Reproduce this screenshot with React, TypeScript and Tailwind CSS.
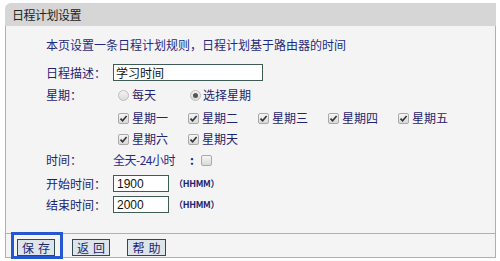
import React from "react";

const font = { fontFamily: '"Noto Sans CJK SC", "Liberation Sans", sans-serif' };

function Check({ checked = true }: { checked?: boolean }) {
  return (
    <span className="inline-flex items-center justify-center w-[11px] h-[11px] border border-[#a9a9a9] rounded-[2px] bg-gradient-to-b from-[#f6f6f6] to-[#d9d9d9] shrink-0">
      {checked && (
        <svg width="9" height="9" viewBox="0 0 9 9">
          <path d="M1.5 4.6 L3.6 6.8 L7.6 2" stroke="#333" strokeWidth="1.6" fill="none" />
        </svg>
      )}
    </span>
  );
}

function Radio({ checked }: { checked?: boolean }) {
  return (
    <span className="inline-flex items-center justify-center w-[11px] h-[11px] rounded-full border border-[#bdbdbd] bg-gradient-to-b from-[#f2f2f2] to-[#dcdcdc] shrink-0">
      {checked && <span className="w-[5px] h-[5px] rounded-full bg-[#555]" />}
    </span>
  );
}

const days1 = ["星期一", "星期二", "星期三", "星期四", "星期五"];
const days2 = ["星期六", "星期天"];

export default function App() {
  return (
    <div className="w-[500px] h-[261px] bg-white pt-[3px] pl-[5px]" style={font}>
      <div className="w-[491px]">
        <div className="h-[23px] bg-[#d6d6d6] rounded-tl-[6px] flex items-center pl-[7px] text-[12px] text-[#222] tracking-[-0.5px]">
          日程计划设置
        </div>

        <div className="h-[208px] bg-[#f4f4f4] border-x border-b border-[#f2a444] pl-[40px] text-[12px] text-[#1e2470] flex flex-col">
          <div className="mt-[11px] h-[16px] flex items-center text-[#1f2c80]">
            本页设置一条日程计划规则，日程计划基于路由器的时间
          </div>

          <div className="mt-[11px] h-[17px] flex items-center">
            <span className="w-[67px]">日程描述：</span>
            <div className="w-[150px] h-[17px] border border-[#3d5c55] bg-white flex items-center pl-[2px] text-[#111]">
              学习时间
            </div>
          </div>

          <div className="mt-[6px] h-[16px] flex items-center">
            <span className="w-[72px]">星期：</span>
            <div className="w-[72px] flex items-center gap-[3px]">
              <Radio />
              <span>每天</span>
            </div>
            <div className="flex items-center gap-[2px]">
              <Radio checked />
              <span>选择星期</span>
            </div>
          </div>

          <div className="mt-[7px] h-[16px] flex items-center pl-[72px]">
            {days1.map((d) => (
              <div key={d} className="w-[70px] flex items-center gap-[3px]">
                <Check />
                <span>{d}</span>
              </div>
            ))}
          </div>

          <div className="mt-[5px] h-[16px] flex items-center pl-[72px]">
            {days2.map((d) => (
              <div key={d} className="w-[70px] flex items-center gap-[3px]">
                <Check />
                <span>{d}</span>
              </div>
            ))}
          </div>

          <div className="mt-[5px] h-[16px] flex items-center">
            <span className="w-[67px]">时间：</span>
            <span className="w-[77px] text-[#1f2c90] tracking-[-0.5px]">全天-24小时</span>
            <span className="w-[11px] font-bold">:</span>
            <Check checked={false} />
          </div>

          <div className="mt-[7px] h-[17px] flex items-center">
            <span className="w-[67px]">开始时间：</span>
            <div className="w-[56px] h-[17px] border border-[#3d5c55] bg-white flex items-center pl-[3px] text-[#111]" style={{ fontFamily: '"Liberation Sans", sans-serif' }}>
              1900
            </div>
            <span className="ml-[5px] text-[9px] font-bold tracking-[-0.3px]">（HHMM）</span>
          </div>

          <div className="mt-[4px] h-[17px] flex items-center">
            <span className="w-[67px]">结束时间：</span>
            <div className="w-[56px] h-[17px] border border-[#3d5c55] bg-white flex items-center pl-[3px] text-[#111]" style={{ fontFamily: '"Liberation Sans", sans-serif' }}>
              2000
            </div>
            <span className="ml-[5px] text-[9px] font-bold tracking-[-0.3px]">（HHMM）</span>
          </div>
        </div>

        <div className="relative h-[24px] bg-[#f4f4f4] border-x border-b border-[#f2a444] flex items-center pl-[11px] gap-[17px] text-[12px] text-[#1e2470]">
          <button className="w-[38px] h-[17px] mt-[4px] bg-[#dde4ea] border border-[#2f4a4f] tracking-[4px] pl-[4px] leading-none">保存</button>
          <button className="w-[38px] h-[17px] mt-[4px] bg-[#dde4ea] border border-[#2f4a4f] tracking-[4px] pl-[4px] leading-none">返回</button>
          <button className="w-[39px] h-[17px] mt-[4px] bg-[#dde4ea] border border-[#2f4a4f] tracking-[4px] pl-[4px] leading-none">帮助</button>
          <div className="absolute left-[5px] top-[-2px] w-[52px] h-[27px] border-[3px] border-[#2457d0]" />
        </div>
      </div>
    </div>
  );
}
